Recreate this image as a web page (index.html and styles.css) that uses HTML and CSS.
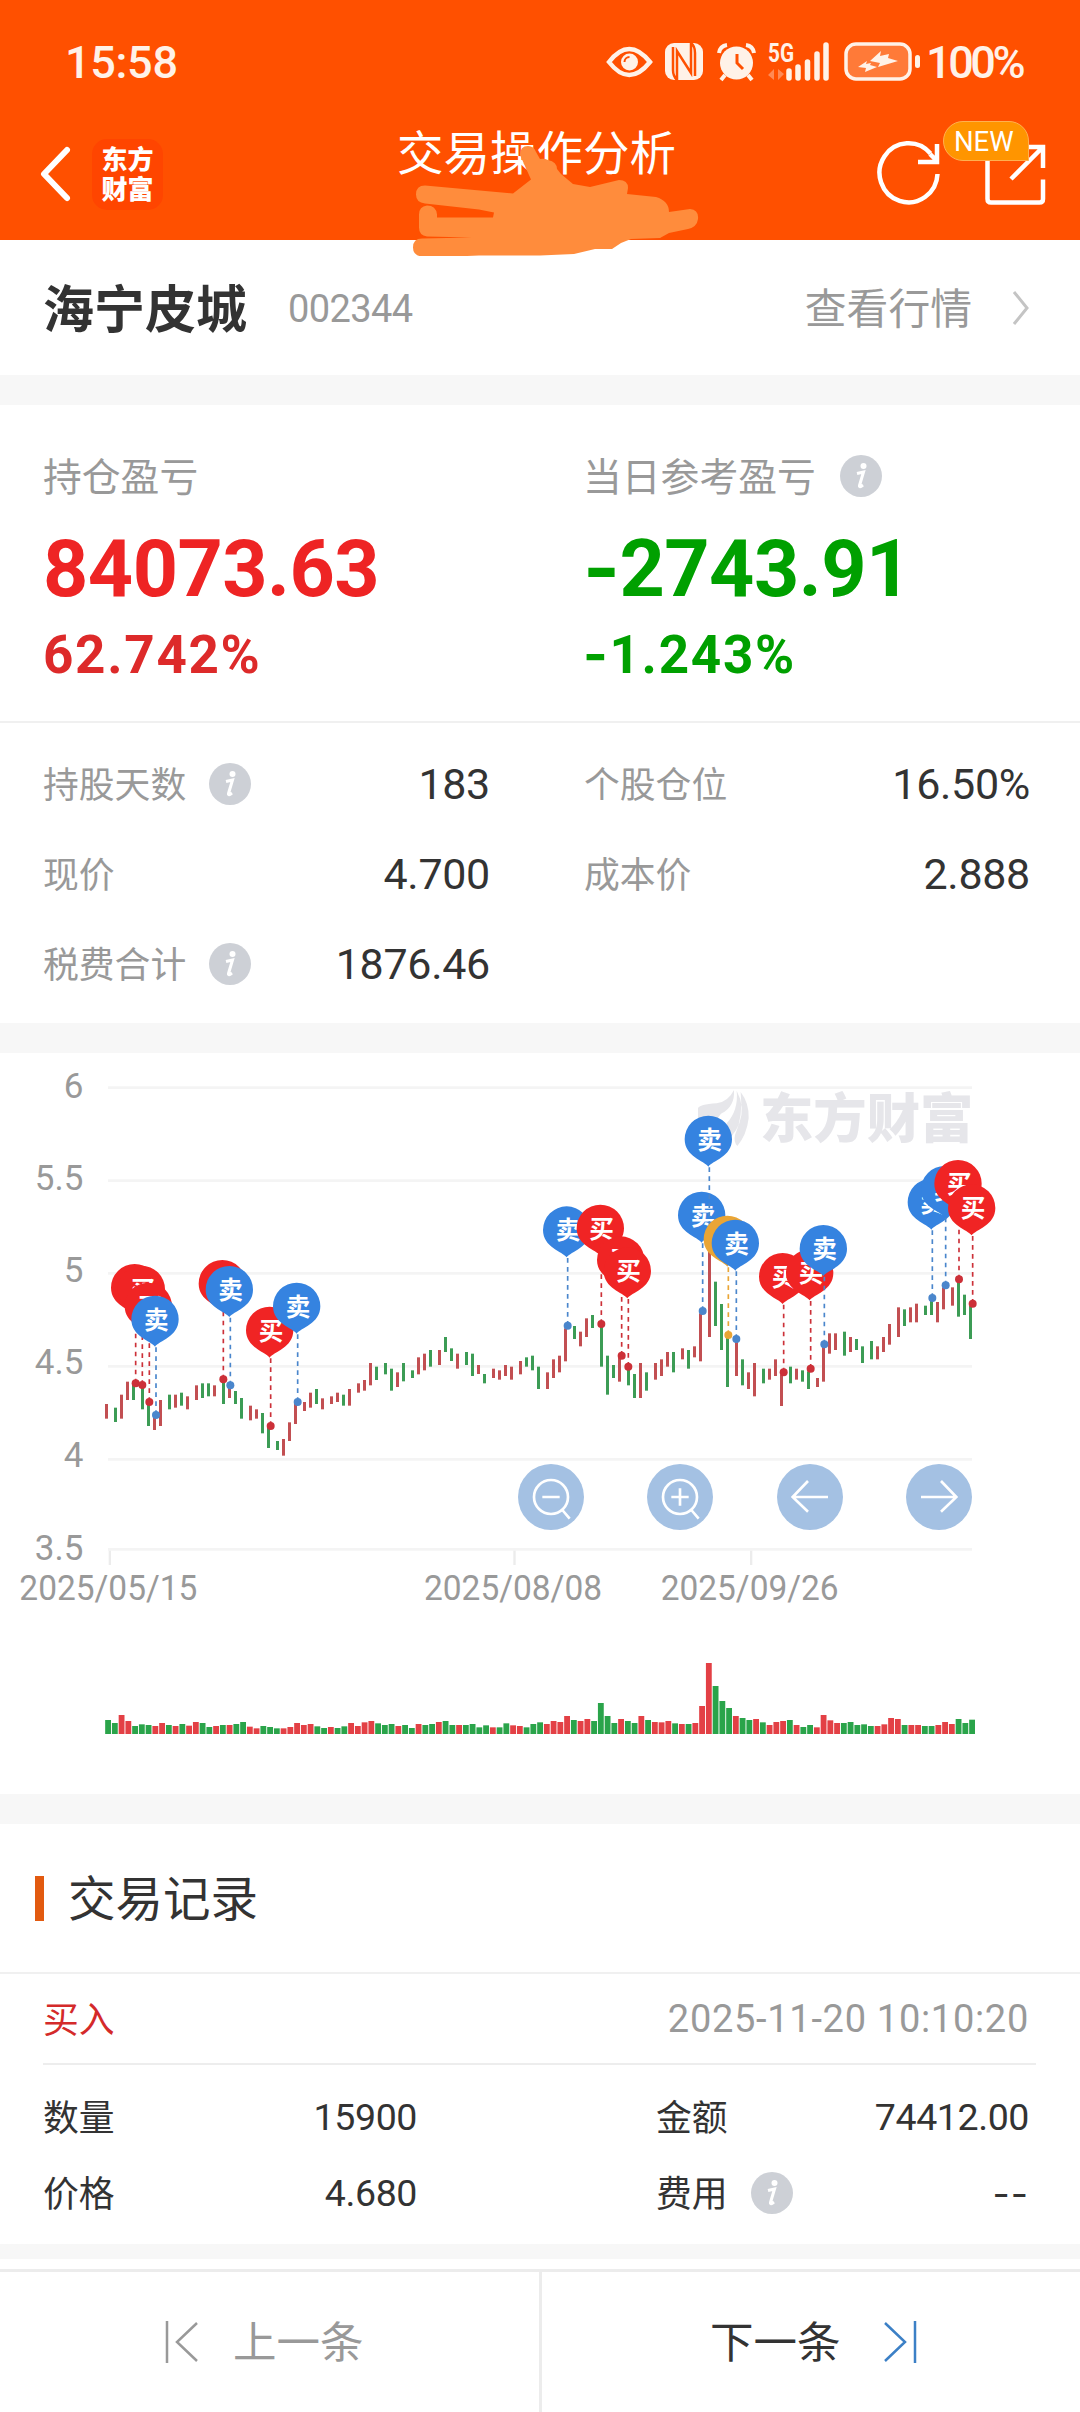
FILE: index.html
```html
<!DOCTYPE html>
<html lang="zh-CN">

<head>
    <meta charset="UTF-8">
    <title>交易操作分析</title>
    <link rel="stylesheet" href="styles.css">
</head>

<body>
    <svg class="defs" width="0" height="0">
        <symbol id="info" viewBox="0 0 42 42">
            <circle cx="21" cy="21" r="21" fill="#cdd0d6" />
            <circle cx="23.5" cy="11" r="3" fill="#fff" />
            <path d="M17 18.5l6.5-1.5-4 13.5q-.6 2.6 3.5-.5" fill="none" stroke="#fff" stroke-width="3" />
        </symbol>
    </svg>

    <header class="header">
        <div class="status">
            <span class="time">15:58</span>
            <svg class="status-icons" width="318" height="60" viewBox="605 32 318 60">
                <!-- eye -->
                <path d="M609 62q20-26 41 0q-21 26-41 0z" fill="none" stroke="#fff2e8" stroke-width="4.5" />
                <circle cx="629.5" cy="62" r="8.5" fill="#fff2e8" />
                <path d="M624.5 62a5 5 0 0 1 5-5" fill="none" stroke="#ff5000" stroke-width="2" />
                <!-- nfc -->
                <rect x="665" y="43" width="38" height="37" rx="9" fill="#fff2e8" />
                <path d="M677 80V51l14 22V43M673 47v23q0 6 4 10M695 76V53q0-7-4-10" fill="none" stroke="#ff5000" stroke-width="2.5" />
                <!-- alarm -->
                <circle cx="736.5" cy="63" r="16.5" fill="#fff2e8" />
                <path d="M719 53q1-7 8-8M754 53q-1-7-8-8M725 75l-4 5M748 75l4 5" fill="none" stroke="#fff2e8" stroke-width="4" />
                <path d="M737 54v9l6 6" fill="none" stroke="#ff5000" stroke-width="3" />
                <!-- signal -->
                <text x="768" y="62" class="net" textLength="26" lengthAdjust="spacingAndGlyphs">5G</text>
                <path d="M768 75l6-6v11zM784 74l-6 6V69z" fill="#ff8a55" />
                <path d="M789 71v7M798 67v11M807.5 62v16M817 54v24M826 45v33" stroke="#fff2e8" stroke-width="5.5" stroke-linecap="round" />
                <!-- battery -->
                <rect x="846" y="44" width="64" height="35" rx="10" fill="#ff7a38" stroke="#fff2e8" stroke-width="3.5" />
                <rect x="915" y="55" width="5" height="13" rx="2.5" fill="#fff2e8" />
                <path d="M881 51l-11 10 10 2-2 4 20-6-10-3 1-4-9 2zM867 61l-9 6 8 1-1 4 12-5-7-2 1-2-5 1z" fill="#fff2e8" />
            </svg>
            <span class="battery">100%</span>
        </div>
        <div class="navbar">
            <svg class="back" width="34" height="58" viewBox="0 0 34 58">
                <path d="M28 5L5 29l23 24" fill="none" stroke="#fff" stroke-width="6" stroke-linecap="round" stroke-linejoin="round" />
            </svg>
            <div class="logo">东方<br>财富</div>
            <h1 class="title">交易操作分析</h1>
            <svg class="actions" width="140" height="70" viewBox="875 140 140 70">
                <path d="M937.5 175a29 29.5 0 1 1-7-20.5" fill="none" stroke="#fff" stroke-width="4.500" />
                <path d="M937 145v18h-19M930 155l6 6" fill="none" stroke="#fff" stroke-width="4.500" />
            </svg>
            <svg class="share" width="66" height="66" viewBox="982 140 66 66">
                <path d="M987.5 155v43q0 3.5 3.5 3.5h48.5q3.5 0 3.5-3.5v-19.500M987 146.5h10M1025 146h18v21M1011 178l31-31" fill="none" stroke="#fff" stroke-width="4.500" />
            </svg>
            <span class="badge">NEW</span>
        </div>
        <svg class="scribble" width="290" height="112" viewBox="410 145 290 112">
            <path d="M520 156q0-9 8-9 6 0 8 6l4 7q4-1 8 1 9 2 9 9l4 5 12 10 17 3 29-7q9 0 9 8l-1 6 29 3q13 4 13 15l21-3q9 1 8 10-1 8-10 10l-19 4-9 5-29 1-10 4-9 6-17 0-21 5-34 1.500h-61l-24 1h-33q-9-1-9-9 0-9 9-9l50-1-45-1q-8-1-8-9v-13q0-8 8-9 9 0 10 9v3l56 0 1-5-15-3-54-6q-9-1-9-9 0-9 9-9l88 8 18-14z" fill="#ff8c3c" />
        </svg>
    </header>

    <section class="stock">
        <span class="stock-name">海宁皮城</span>
        <span class="stock-code">002344</span>
        <span class="stock-link">查看行情</span>
        <svg width="17" height="36" viewBox="0 0 17 36">
            <path d="M2 2l13 16L2 34" fill="none" stroke="#c4c4c4" stroke-width="3" />
        </svg>
    </section>

    <section class="profit">
        <div class="profit-item up">
            <div class="label"><span>持仓盈亏</span></div>
            <div class="amount">84073.63</div>
            <div class="percent">62.742%</div>
        </div>
        <div class="profit-item down">
            <div class="label"><span>当日参考盈亏</span><svg class="info"><use href="#info" /></svg></div>
            <div class="amount"><span class="minus">-</span>2743.91</div>
            <div class="percent"><span class="minus">-</span>1.243%</div>
        </div>
    </section>

    <section class="stats">
        <div class="stat"><span>持股天数</span><svg class="info"><use href="#info" /></svg><b>183</b></div>
        <div class="stat"><span>个股仓位</span><b>16.50%</b></div>
        <div class="stat"><span>现价</span><b>4.700</b></div>
        <div class="stat"><span>成本价</span><b>2.888</b></div>
        <div class="stat"><span>税费合计</span><svg class="info"><use href="#info" /></svg><b>1876.46</b></div>
    </section>

    <section class="chart">
        <svg id="chart" width="1080" height="741" viewBox="0 -21 3240 2223"></svg>
    </section>

    <section class="records">
        <h2 class="records-title"><span>交易记录</span></h2>
        <div class="record">
            <div class="record-head">
                <span class="side">买入</span>
                <span class="date">2025-11-20 10:10:20</span>
            </div>
            <div class="record-body">
                <div class="field"><span>数量</span><b>15900</b></div>
                <div class="field"><span>金额</span><b>74412.00</b></div>
                <div class="field"><span>价格</span><b>4.680</b></div>
                <div class="field"><span>费用</span><svg class="info"><use href="#info" /></svg><b class="dashes">--</b></div>
            </div>
        </div>
    </section>

    <footer class="pager">
        <div class="prev">
            <svg width="34" height="44" viewBox="0 0 34 44">
                <path d="M2 1v42M32 3L12 22l20 19" fill="none" stroke="#999" stroke-width="2.500" />
            </svg>
            <span>上一条</span>
        </div>
        <div class="next">
            <span>下一条</span>
            <svg width="34" height="44" viewBox="0 0 34 44">
                <path d="M32 1v42M2 3l20 19L2 41" fill="none" stroke="#3c80c6" stroke-width="2.500" />
            </svg>
        </div>
    </footer>

    <script src="chart.js"></script>
</body>

</html>
```
FILE: styles.css
```css
* {
    box-sizing: border-box;
}

body {
    margin: 0;
    width: 1080px;
    height: 2412px;
    overflow: hidden;
    display: flex;
    flex-direction: column;
    background-color: #f7f7f7;
    font-family: Roboto, "Noto Sans CJK SC", sans-serif;
    color: #333;
}

svg {
    display: block;
    flex: none;
}

.defs {
    position: absolute;
}

.info {
    width: 42px;
    height: 42px;
}

/* header */
.header {
    position: relative;
    height: 240px;
    background-color: #ff5000;
    color: #fff;
}

.status {
    display: flex;
    align-items: center;
    height: 124px;
    padding: 0 56px 0 65px;
    color: #fff2e8;
    font-size: 45px;
    font-weight: 500;
}

.time {
    letter-spacing: -0.3px;
}

.status-icons {
    margin-left: auto;
}

.net {
    font: bold 26px Roboto, sans-serif;
    fill: #fff2e8;
}

.battery {
    width: 98px;
    margin-left: 3px;
    letter-spacing: -3.4px;
}

.navbar {
    position: relative;
    display: flex;
    align-items: center;
    height: 100px;
    padding: 0 32px 0 39px;
}

.logo {
    width: 71px;
    height: 71px;
    margin-left: 19px;
    padding-top: 4px;
    border-radius: 15px;
    background-color: #ff4500;
    font: 900 26px/30px "Noto Sans CJK SC", sans-serif;
    text-align: center;
}

.title {
    flex: 1;
    margin: -40px 0 0 35px;
    font-size: 46.5px;
    font-weight: 400;
    text-align: center;
    line-height: 60px;
}

.share {
    margin-left: -33px;
}

.badge {
    position: absolute;
    left: 943px;
    top: -3px;
    width: 86px;
    height: 40px;
    padding-left: 10px;
    border: 1px solid #ffb050;
    border-radius: 20px 20px 0 20px;
    background-color: #ff9500;
    font-size: 27.5px;
    line-height: 40px;
}

.scribble {
    position: absolute;
    left: 410px;
    top: 144px;
}

/* stock */
.stock {
    display: flex;
    align-items: center;
    height: 135px;
    padding: 0 51px 0 43px;
    background-color: #fff;
}

.stock-name {
    padding-bottom: 3px;
    font-size: 51px;
    font-weight: 700;
}

.stock-code {
    margin-left: 41px;
    padding-top: 2px;
    font-size: 38px;
    letter-spacing: -0.6px;
    color: #999;
}

.stock-link {
    margin: 0 40px 0 auto;
    padding-bottom: 3px;
    font-size: 41.8px;
    color: #999;
}

/* profit */
.profit {
    display: grid;
    grid-template-columns: 540px 540px;
    height: 318px;
    margin-top: 30px;
    padding-top: 41px;
    border-bottom: 2px solid #f0f0f0;
    background-color: #fff;
}

.profit-item {
    padding-left: 43px;
}

.label {
    display: flex;
    align-items: center;
    gap: 24px;
    height: 60px;
    font-size: 38.8px;
    color: #999;
}

.label span {
    padding-bottom: 4px;
}

.amount {
    height: 120px;
    font-size: 79px;
    font-weight: 700;
    line-height: 127px;
    letter-spacing: -0.5px;
}

.percent {
    font-size: 53px;
    font-weight: 700;
    line-height: 58px;
    letter-spacing: 1.7px;
}

.up .amount,
.up .percent {
    color: #ee2424;
}

.up .percent {
    color: #dd2a2a;
}

.down .amount,
.down .percent {
    color: #00a000;
}

.minus {
    display: inline-block;
    font-family: Inter, sans-serif;
    line-height: 1;
}

.stats {
    display: grid;
    grid-template-columns: 541px 540px;
    grid-auto-rows: 90px;
    height: 300px;
    padding-top: 16px;
    background-color: #fff;
}

.stat {
    display: flex;
    align-items: center;
    padding: 0 51px 0 43px;
    font-size: 35.8px;
    color: #999;
}

.stat span,
.field span {
    padding-bottom: 4px;
}

.stat .info {
    margin-left: 23px;
}

.stat b {
    margin-left: auto;
    font-size: 43px;
    font-weight: 400;
    letter-spacing: -0.3px;
    color: #333;
}

/* chart */
.chart {
    height: 741px;
    margin-top: 30px;
    background-color: #fff;
}

.axis {
    font: 105px Roboto, sans-serif;
    fill: #999;
}

.watermark {
    font: 900 160px "Noto Sans CJK SC", sans-serif;
    fill: #e6e6ea;
}

.pin {
    font: 700 74px "Noto Sans CJK SC", sans-serif;
    fill: #fff;
    text-anchor: middle;
}

/* records */
.records {
    height: 420px;
    margin-top: 30px;
    background-color: #fff;
}

.records-title {
    display: flex;
    align-items: center;
    height: 150px;
    margin: 0;
    padding-left: 35px;
    border-bottom: 2px solid #f0f0f0;
    font-size: 47.5px;
    font-weight: 400;
}

.records-title::before {
    content: "";
    width: 9px;
    height: 45px;
    margin-right: 24px;
    background-color: #e25a10;
}

.records-title span {
    padding-bottom: 5px;
}

.record-head {
    display: flex;
    align-items: center;
    justify-content: space-between;
    height: 91px;
    margin: 0 44px 0 43px;
    padding-right: 7px;
    border-bottom: 2px solid #ededed;
}

.side {
    padding-bottom: 3px;
    font-size: 35.8px;
    color: #d42a2a;
}

.date {
    font-size: 38px;
    letter-spacing: 0.7px;
    color: #999;
}

.record-body {
    display: grid;
    grid-template-columns: 374px 373px;
    grid-auto-rows: 76px;
    justify-content: space-between;
    padding: 14px 51px 0 43px;
}

.field {
    display: flex;
    align-items: center;
    font-size: 35.8px;
}

.field .info {
    margin-left: 23px;
}

.field b {
    margin-left: auto;
    font-size: 37.5px;
    font-weight: 400;
    letter-spacing: -0.4px;
}

.field .dashes {
    font-family: Inter, sans-serif;
    letter-spacing: 1px;
}

/* pager */
.pager {
    display: flex;
    height: 153px;
    margin-top: 15px;
    padding-top: 10px;
    background-color: #fff;
}

.prev,
.next {
    display: flex;
    align-items: center;
    border-top: 3px solid #ececec;
    font-size: 43.5px;
}

.prev span,
.next span {
    padding-bottom: 6px;
}

.prev {
    width: 542px;
    gap: 34px;
    padding-left: 165px;
    border-right: 3px solid #ececec;
    color: #999;
}

.next {
    flex: 1;
    gap: 42px;
    padding-left: 168px;
}
```
FILE: chart.js
```js
const svg = document.getElementById('chart');
const RED = '#c24f52';
const GREEN = '#3c9c55';
let out = '';

// Horizontal grid lines with price labels
const grid = [['6', 83, 32], ['5.5', 362, 27], ['5', 640, 25], ['4.5', 919, 24], ['4', 1198, 22], ['3.5', 1468, 32]];
grid.forEach(([label, y, dy]) => {
    out += `<rect x="324" y="${y - 4}" width="2592" height="8" fill="#f4f4f4"/>`;
    out += `<text class="axis" x="250" y="${y + dy}" text-anchor="end">${label}</text>`;
});

// Date labels
[['2025/05/15', 326], ['2025/08/08', 1540], ['2025/09/26', 2250]].forEach(([label, x]) => {
    out += `<rect x="${x}" y="1472" width="7" height="43" fill="#ececec"/>`;
    out += `<text class="axis" x="${x - 268}" y="1620" textLength="534" lengthAdjust="spacingAndGlyphs">${label}</text>`;
});

// Watermark
out += `<path d="M2094 145Q2098 133 2150 130Q2185 125 2202 90Q2205 140 2165 160Q2150 170 2130 250L2094 200Z
    M2210 92Q2216 150 2180 190Q2160 225 2165 250Q2200 235 2218 190Q2236 140 2210 92Z
    M2222 96Q2248 130 2246 175Q2240 225 2212 258Q2200 245 2205 225Q2230 170 2222 96Z" fill="#e6e6ea"/>`;
out += '<text class="watermark" x="2280" y="234" textLength="640" lengthAdjust="spacingAndGlyphs">东方财富</text>';

// Daily ranges: colour, high, low
const candles = `R1032,1076 G1043,1086 R1004,1076 R965,1020 G970,1020 G980,1048 G1032,1098 R1070,1110
R1020,1098 G1004,1048 R1004,1043 G998,1037 R1009,1048 R976,1020 G970,1014 G970,1009
R976,1009 G965,1032 R981,1014 G993,1032 G1014,1076 R1037,1081 R1048,1076 G1059,1120
G1103,1164 G1143,1170 R1137,1187 R1087,1143 R1030,1092 R1026,1053 R998,1043 G987,1032
R1015,1048 R1009,1032 R998,1026 G1004,1037 R987,1037 R970,998 R960,992 R909,976
G920,960 G909,943 G926,992 R937,981 G909,964 G931,954 R892,943 R881,931
G870,920 R870,915 G831,876 G865,903 R881,926 G876,915 G881,948 R915,942
G942,970 R926,954 R931,959 R915,948 R920,959 R903,943 G892,920 G887,931
G920,987 R937,987 R898,954 R887,937 R805,904 G798,837 R815,859 R775,831
G765,804 G792,920 G887,1004 G915,954 R892,965 G926,976 G942,1014 R909,1014
G937,992 R909,959 R898,948 R876,920 G876,937 R865,898 G870,926 R859,892
R760,904 R535,831 G665,798 G732,870 G830,981 R843,948 G898,976 R937,987
R909,1009 G926,970 R926,959 R898,948 R943,1038 G920,970 R926,959 G931,965
G934,987 R954,981 R859,965 R820,881 R820,870 G815,887 R831,876 G837,870
G859,909 G843,898 R859,898 R831,876 R792,854 R742,831 G748,798 R742,787
R731,787 G737,765 G722,765 R726,787 R682,748 R682,737 G665,770 G704,765 G738,837`.split(/\s+/);

candles.forEach((c, i) => {
    const [high, low] = c.slice(1).split(',').map(Number);
    const x = 315 + 81 * Math.floor(i / 4) + [0, 27, 45, 63][i % 4];
    out += `<rect x="${x}" y="${high}" width="9" height="${low - high}" fill="${c[0] === 'R' ? RED : GREEN}"/>`;
});

// Volume bars
const volume = `G42 G33 R57 R39 G24 G29 G27 R24 R33 G27 R24 G30 R25 R36 G33 G21 R24 G27 R27 G30 G36 R22
R17 G24 G21 G17 R17 R21 R33 R27 R30 G23 G18 R21 G18 G23 R33 R24 R35 R39 G32 G27 G30 R24
G27 G18 R30 G27 G30 R36 G39 G27 R27 G27 G30 G20 G26 R20 G20 G32 R26 R24 G20 G30 G35 R30
R39 R36 R54 G42 R39 R45 G39 G93 G54 G33 R45 G39 G33 R54 G42 R36 R35 R39 G32 R30 G30 R33
R84 R213 G144 G99 G78 R54 G48 G42 R45 G35 R27 R36 R39 G42 R27 G21 G27 R20 R57 R41 R33
G33 G36 G27 G29 G24 R24 R29 R48 R45 G27 R27 R27 G24 G24 R27 R36 R30 G45 G33 G43`.split(/\s+/);

volume.forEach((v, i) => {
    const h = Number(v.slice(1));
    out += `<rect x="${324 + i * 20.25 - 8.5}" y="${2022 - h}" width="17.5" height="${h}" fill="${v[0] === 'R' ? '#e34045' : '#2aa44a'}"/>`;
});

// Trade markers: type, x, y of the trade
const trades = [
    ['B', 407, 970], ['B', 427, 975], ['B', 448, 1026], ['S', 468, 1065],
    ['B', 670, 958], ['S', 691, 976], ['B', 812, 1098], ['S', 893, 1026],
    ['S', 1703, 797], ['B', 1804, 792], ['B', 1865, 887], ['B', 1885, 920],
    ['S', 2108, 753], ['S', 2128, 525], ['T', 2185, 825], ['S', 2209, 837],
    ['B', 2351, 937], ['B', 2432, 926], ['S', 2473, 853], ['S', 2797, 714],
    ['S', 2837, 676], ['B', 2877, 658], ['B', 2918, 731]
];
const pins = {
    B: ['#f02424', '买', '#cc3038'],
    S: ['#3583e0', '卖', '#4a86cc'],
    T: ['#eaa535', 'T', '#eaa535']
};

trades.forEach(([type, x, y]) => {
    const [fill, text, dot] = pins[type];
    const cx = x - 3;
    const cy = y - 287;
    out += `<path d="M${x} ${y}V${cy + 82}" stroke="${dot}" stroke-width="5" stroke-dasharray="14 13" fill="none"/>`;
    out += `<circle cx="${x}" cy="${y}" r="12" fill="${dot}"/>`;
    out += `<path d="M${cx} ${cy + 82}C${cx - 12} ${cy + 65} ${cx - 71} ${cy + 52} ${cx - 71} ${cy}
        A71 71 0 0 1 ${cx + 71} ${cy}C${cx + 71} ${cy + 52} ${cx + 12} ${cy + 65} ${cx} ${cy + 82}Z" fill="${fill}"/>`;
    out += `<text class="pin" x="${cx + 4}" y="${cy + 28}">${text}</text>`;
});

// Zoom and scroll buttons
const icons = [
    '<circle r="51"/><path d="M-26 0H26M34 39L56 65"/>',
    '<circle r="51"/><path d="M-26 0H26M0-26V26M34 39L56 65"/>',
    '<path d="M54 0H-52M-6-48L-52 0L-6 44"/>',
    '<path d="M-54 0H52M6-48L52 0L6 44"/>'
];
[1653, 2040, 2430, 2817].forEach((x, i) => {
    out += `<circle cx="${x}" cy="1311" r="99" fill="#a4c1e3"/>`;
    out += `<g transform="translate(${x} 1311)" fill="none" stroke="#fff" stroke-width="8">${icons[i]}</g>`;
});

svg.innerHTML = out;
```
